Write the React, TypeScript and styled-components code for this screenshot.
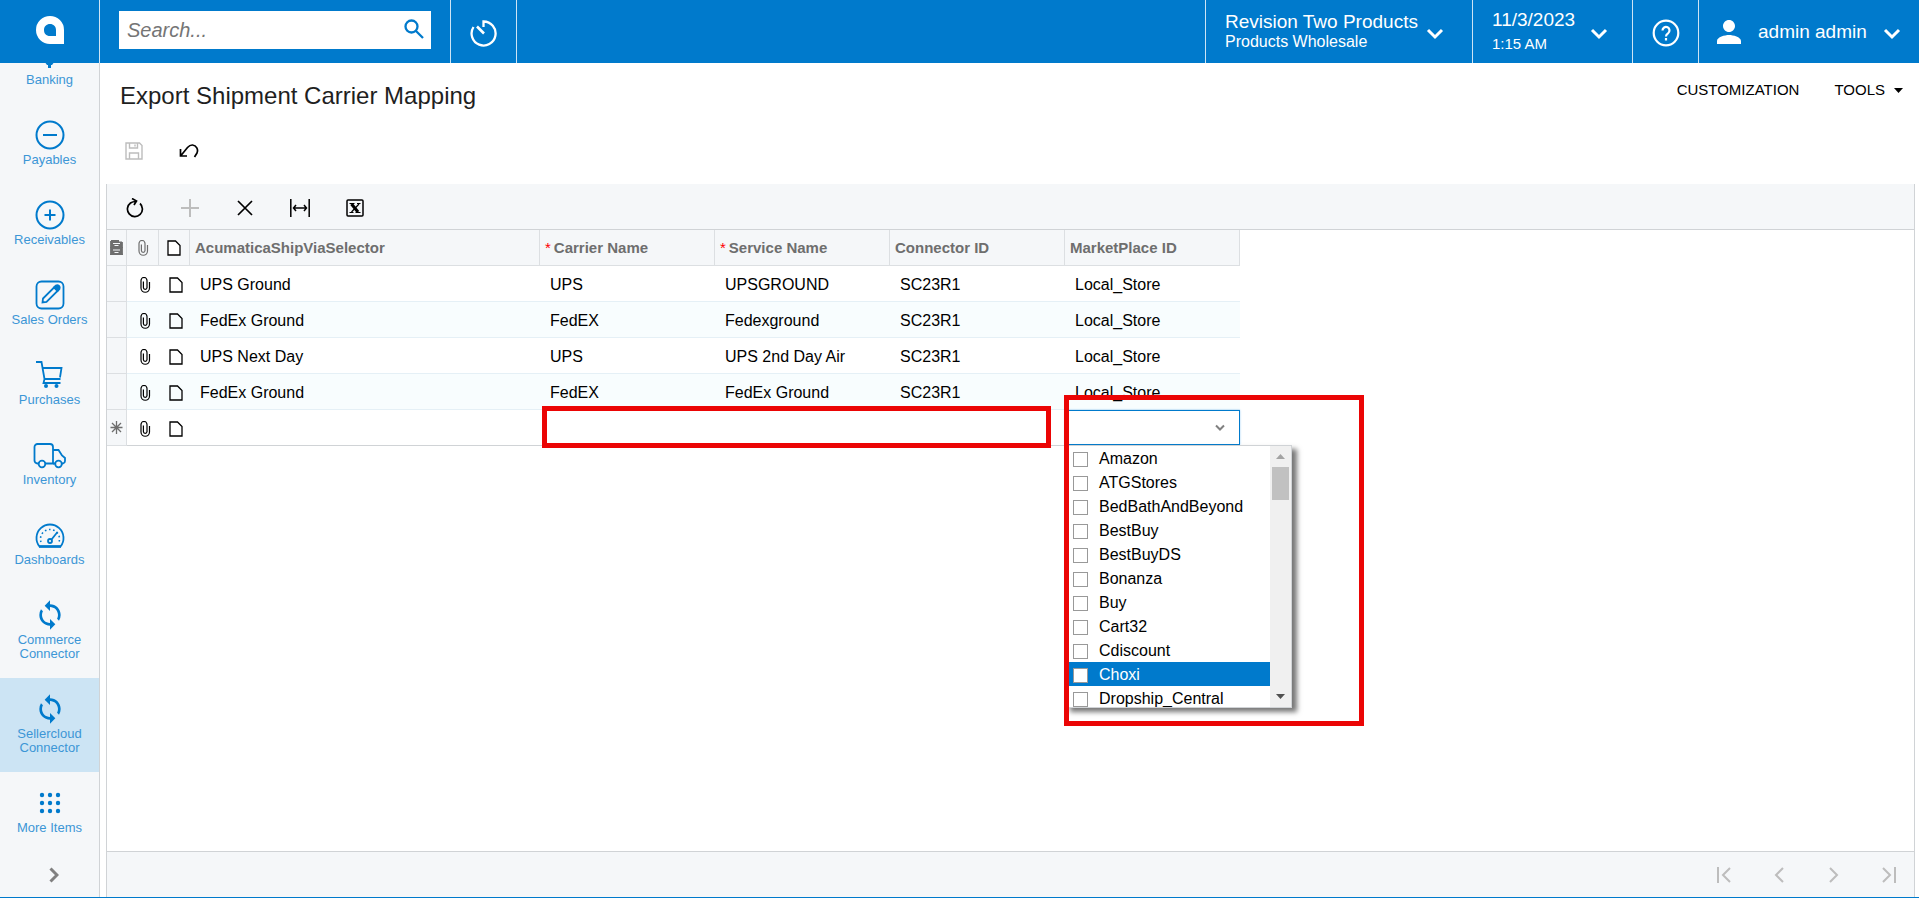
import React, { useState } from "react";
import styled, { createGlobalStyle, css } from "styled-components";
import { MdPerson, MdSync } from "react-icons/md";

const color = {
  brand: "#007acc",
  label: "#3c96d6",
  chrome: "#f5f7f9",
  line: "#d0d3d6",
  rowLine: "#e5f0f6",
  muted: "#6e6e6e",
  disabled: "#bdbdbd",
  mark: "#eb0505",
};

const GlobalStyle = createGlobalStyle`
  * { box-sizing: border-box; }
  body {
    margin: 0;
    background: #fff;
    color: #000;
    font-family: "Liberation Sans", Arial, sans-serif;
    font-size: 16px;
  }
  button, input { font: inherit; color: inherit; }
  button { margin: 0; padding: 0; border: 0; background: none; cursor: pointer; }
  svg { display: block; flex: none; }
`;

const Page = styled.div`
  display: flex;
  flex-direction: column;
  height: 100vh;
  border-bottom: 1px solid ${color.brand};
`;

const TopBar = styled.header`
  display: flex;
  flex: none;
  height: 63px;
  background: ${color.brand};
  color: #fff;
`;

const HomeLink = styled.a`
  display: flex;
  align-items: center;
  justify-content: center;
  width: 100px;
  padding-bottom: 3px;
  border-right: 1px solid #cce4f5;
  color: #fff;
`;

const SearchForm = styled.form`
  display: flex;
  align-items: center;
  width: 312px;
  height: 38px;
  margin: 11px 19px;
  padding: 0 7px 2px 8px;
  background: #fff;
  color: ${color.brand};
`;

const SearchInput = styled.input`
  flex: 1;
  min-width: 0;
  padding: 2px 0 0;
  border: 0;
  outline: 0;
  background: none;
  font-size: 20px;
  font-style: italic;
  color: #333;
  &::placeholder { color: #757575; opacity: 1; }
`;

const BarButton = styled.button<{ $width: number; $divider?: boolean }>`
  display: flex;
  align-items: center;
  justify-content: center;
  width: ${(p) => p.$width}px;
  padding-top: 2px;
  ${(p) => p.$divider && css`border-left: 1px solid #cce4f5;`}
`;

const BarSpacer = styled.div`
  flex: 1;
  border-left: 1px solid #cce4f5;
`;

const BarMenu = styled.button<{ $width: number; $right: number; $tall?: boolean }>`
  display: flex;
  align-items: center;
  justify-content: space-between;
  width: ${(p) => p.$width}px;
  padding: 0 ${(p) => p.$right}px 0 19px;
  border-left: 1px solid #cce4f5;
  text-align: left;
  white-space: nowrap;
  font-size: 16px;
  line-height: ${(p) => (p.$tall ? 24 : 20)}px;
  > svg { margin-top: 5px; }
`;

const BarLines = styled.span<{ $small?: boolean }>`
  display: flex;
  flex-direction: column;
  font-size: ${(p) => (p.$small ? 15 : 16)}px;
`;

const BarTitle = styled.strong`
  font-size: 19px;
  font-weight: 400;
`;

const UserMenu = styled(BarMenu)`
  justify-content: flex-start;
  gap: 11px;
  padding: 0 18px 0 12px;
  > svg:first-child { margin-top: 0; }
  > svg:last-child { margin-left: auto; }
`;

const Body = styled.div`
  display: flex;
  flex: 1;
  min-height: 0;
`;

const Sidebar = styled.nav`
  display: flex;
  flex-direction: column;
  flex: none;
  width: 100px;
  background: ${color.chrome};
  border-right: 1px solid ${color.line};
`;

const NavList = styled.ul`
  display: flex;
  flex-direction: column;
  justify-content: flex-end;
  flex: 1;
  min-height: 0;
  margin: 0;
  padding: 0;
  overflow: hidden;
  list-style: none;
`;

const NavItem = styled.li`
  flex: none;
`;

const NavLink = styled.a<{ $active?: boolean }>`
  display: flex;
  flex-direction: column;
  align-items: center;
  padding: 15px 8px 17px;
  background: ${(p) => (p.$active ? "#cce4f4" : "transparent")};
  color: ${color.label};
  font-size: 13px;
  line-height: 14px;
  text-align: center;
  text-decoration: none;
  svg { color: ${color.brand}; margin-bottom: 2px; }
`;

const NavToggle = styled.button`
  display: flex;
  align-items: center;
  justify-content: center;
  height: 45px;
  padding-left: 9px;
  color: #808080;
`;

const Main = styled.main`
  display: flex;
  flex-direction: column;
  flex: 1;
  min-width: 0;
  padding: 0 4px 0 6px;
`;

const TitleRow = styled.div`
  display: flex;
  justify-content: space-between;
  align-items: flex-start;
  height: 66px;
  padding: 18px 12px 0 14px;
`;

const Title = styled.h1`
  margin: 0;
  font-size: 24px;
  font-weight: 400;
  line-height: 30px;
  color: #1f1f1f;
`;

const TitleMenu = styled.div`
  display: flex;
  gap: 35px;
`;

const TitleMenuButton = styled.button`
  display: flex;
  align-items: center;
  gap: 9px;
  font-size: 15px;
  line-height: 18px;
`;

const ActionBar = styled.div`
  display: flex;
  align-items: flex-start;
  height: 55px;
`;

const IconButton = styled.button<{ $width?: number }>`
  display: flex;
  align-items: center;
  justify-content: center;
  width: ${(p) => p.$width ?? 55}px;
  height: 43px;
  &:disabled { color: ${color.disabled}; cursor: default; }
`;

const GridPanel = styled.section`
  display: flex;
  flex-direction: column;
  flex: 1;
  min-height: 0;
  border: solid ${color.line};
  border-width: 0 1px;
`;

const GridToolbar = styled.div`
  display: flex;
  height: 46px;
  padding-top: 2px;
  background: ${color.chrome};
  border-bottom: 1px solid ${color.line};
`;

const GridArea = styled.div`
  flex: 1;
  min-height: 0;
`;

const GridFooter = styled.footer`
  display: flex;
  align-items: center;
  justify-content: flex-end;
  gap: 5px;
  height: 46px;
  background: ${color.chrome};
  border-top: 1px solid ${color.line};
`;

const Table = styled.table`
  width: 1133px;
  table-layout: fixed;
  border-spacing: 0;
`;

const HeadCell = styled.th<{ $icon?: boolean }>`
  height: 36px;
  padding: 0 ${(p) => (p.$icon ? 0 : 5)}px;
  background: ${color.chrome};
  border-right: 1px solid #dcdfe2;
  border-bottom: 1px solid #dcdfe2;
  color: ${color.muted};
  font-size: 15px;
  text-align: left;
  white-space: nowrap;
  > svg { margin: 0 auto; }
`;

const Required = styled.span`
  margin-right: 3px;
  color: #f00;
  font-size: 15px;
  font-weight: 400;
`;

const Row = styled.tr<{ $alt?: boolean; $last?: boolean }>`
  background: ${(p) => (p.$alt ? "#f8fdfe" : "#fff")};
  td { border-bottom: 1px solid ${(p) => (p.$last ? color.line : color.rowLine)}; }
`;

const Cell = styled.td`
  position: relative;
  height: 36px;
  padding: 3px 10px 0;
  white-space: nowrap;
`;

const MarkerCell = styled.td`
  padding: 0;
  background: ${color.chrome};
  border-right: 1px solid #dcdfe2;
  border-bottom-color: #dcdfe2 !important;
  color: ${color.muted};
  svg { margin: 0 auto; }
`;

const IconCell = styled.td`
  padding: 2px 0 0 3px;
`;

const CellButton = styled.button`
  display: block;
  margin: 0 auto;
`;

const EditorCell = styled.td`
  position: relative;
  padding: 0;
`;

const Combo = styled.div`
  display: flex;
  align-items: center;
  height: 35px;
  padding-right: 13px;
  background: #fff;
  border: 1px solid ${color.brand};
  box-shadow: 0 0 2px #9fd0f5;
  color: #808080;
`;

const ComboInput = styled.input`
  flex: 1;
  min-width: 0;
  padding: 0 9px;
  border: 0;
  outline: 0;
  background: none;
`;

const Popup = styled.div`
  position: absolute;
  top: 35px;
  left: 0;
  z-index: 1;
  display: flex;
  width: 227px;
  height: 263px;
  background: #fff;
  border: 1px solid ${color.line};
  box-shadow: 5px 4px 5px #777;
`;

const OptionList = styled.div`
  flex: 1;
  overflow: hidden;
`;

const Option = styled.label<{ $active?: boolean }>`
  display: flex;
  align-items: center;
  gap: 11px;
  height: 24px;
  padding: 2px 0 0 7px;
  background: ${(p) => (p.$active ? color.brand : "transparent")};
  color: ${(p) => (p.$active ? "#fff" : "#000")};
`;

const Tick = styled.input`
  appearance: none;
  width: 15px;
  height: 15px;
  margin: 0;
  background: #fff;
  border: 1px solid #999;
  &:checked { background: ${color.brand}; }
`;

const ScrollTrack = styled.div`
  display: flex;
  flex-direction: column;
  align-items: center;
  width: 21px;
  background: #f0f0f0;
`;

const ScrollThumb = styled.div`
  width: 17px;
  height: 33px;
  margin-bottom: auto;
  background: #c1c1c1;
`;

const ScrollButton = styled.button<{ $dim?: boolean }>`
  display: flex;
  align-items: center;
  justify-content: center;
  width: 21px;
  height: 21px;
  color: ${(p) => (p.$dim ? "#a3a3a3" : "#505050")};
`;

const Highlight = styled.div<{ $area: "fields" | "list" }>`
  position: absolute;
  z-index: 2;
  border: 5px solid ${color.mark};
  pointer-events: none;
  ${(p) =>
    p.$area === "fields"
      ? css`top: -4px; left: 2px; width: 509px; height: 42px;`
      : css`top: -15px; left: -1px; width: 300px; height: 331px;`}
`;

type IconProps = { w: number; h?: number; sw?: number; children: React.ReactNode };

const Icon = ({ w, h = w, sw = 2, children }: IconProps) => (
  <svg width={w} height={h} viewBox={`0 0 ${w} ${h}`} fill="none" stroke="currentColor" strokeWidth={sw} aria-hidden="true">
    {children}
  </svg>
);

const Chevron = () => (
  <Icon w={18} h={12} sw={3}><path d="M2 2l7 7 7-7" /></Icon>
);

const Clip = () => (
  <Icon w={12} h={16} sw={1.2}>
    <path d="M8 4.500v6a1.800 1.800 0 0 1-3.600 0V4.500M8 11V3.500a3 3 0 0 0-6 0V11a4.200 4.200 0 0 0 8.500 0V5" />
  </Icon>
);

const Doc = () => (
  <Icon w={14} h={16} sw={1.3}><path d="M1 1h7.500l4.500 4.500V15H1z" /></Icon>
);

const navIcons: Record<string, React.ReactNode> = {
  Banking: <Icon w={32}><path d="M15 3L3 9h24zM7 12v8M15 12v8M23 12v8" /><path d="M10 22h11l-3 4h-1v3h-3v-3h-1z" fill="currentColor" stroke="none" /></Icon>,
  Payables: <Icon w={32}><circle cx="16" cy="16" r="13.500" /><path d="M9 16h14" /></Icon>,
  Receivables: <Icon w={32}><circle cx="16" cy="16" r="13.500" /><path d="M10.500 16h11M16 10.500v11" /></Icon>,
  "Sales Orders": (
    <Icon w={32} sw={1.8}>
      <rect x="2.500" y="2.500" width="27" height="27" rx="5" />
      <path d="M8.500 23.500l.5-4L20.500 8l3.500 3.500L12.500 23z" />
      <path d="M20 8.500l2-2q1.500-1 3 .5t.5 3l-2 2z" fill="currentColor" />
    </Icon>
  ),
  Purchases: (
    <Icon w={32} sw={1.8}>
      <path d="M2 3h5.500l3 17h16M8.500 9h19l-1.500 9.500M10.500 20l-1 4h17" />
      <circle cx="12" cy="27" r="2" fill="currentColor" stroke="none" />
      <circle cx="22.500" cy="27" r="2" fill="currentColor" stroke="none" />
    </Icon>
  ),
  Inventory: (
    <Icon w={34} h={32} sw={1.8}>
      <path d="M6 24.500H4.500a3 3 0 0 1-3-3V8a3 3 0 0 1 3-3H17a3 3 0 0 1 3 3v16.500h-7.500M20 11h5.500l3.500 5.500 3 2.500v3q0 2-2 2.500h-1" />
      <path d="M20 24.500h2" /><circle cx="9" cy="25" r="3.300" /><circle cx="25.500" cy="25" r="3.300" />
    </Icon>
  ),
  Dashboards: (
    <Icon w={32} sw={1.8}>
      <path d="M5.500 27.500A13.500 13.500 0 1 1 26.500 27.500z" />
      <path d="M5 27.500h22" strokeWidth="2.500" />
      <path d="M7 23a9.500 9.500 0 1 1 18 0" strokeDasharray="1.600 2.600" strokeWidth="1.600" />
      <circle cx="16" cy="22" r="2" /><path d="M17.500 20.500L23.500 13" />
    </Icon>
  ),
  "Commerce Connector": <MdSync size={32} />,
  "Sellercloud Connector": <MdSync size={32} />,
  "More Items": (
    <Icon w={32}>
      <g fill="currentColor" stroke="none">
        {[8, 16, 24].map((y) => [8, 16, 24].map((x) => <circle key={`${x}-${y}`} cx={x} cy={y} r="2.200" />))}
      </g>
    </Icon>
  ),
};

const rows = [
  ["UPS Ground", "UPS", "UPSGROUND", "SC23R1", "Local_Store"],
  ["FedEx Ground", "FedEX", "Fedexground", "SC23R1", "Local_Store"],
  ["UPS Next Day", "UPS", "UPS 2nd Day Air", "SC23R1", "Local_Store"],
  ["FedEx Ground", "FedEX", "FedEx Ground", "SC23R1", "Local_Store"],
];

const columns = [
  { name: "AcumaticaShipViaSelector" },
  { name: "Carrier Name", required: true },
  { name: "Service Name", required: true },
  { name: "Connector ID" },
  { name: "MarketPlace ID" },
];

const columnWidths = [20, 32, 31, 350, 175, 175, 175, 175];

const marketplaces = [
  "Amazon", "ATGStores", "BedBathAndBeyond", "BestBuy", "BestBuyDS", "Bonanza",
  "Buy", "Cart32", "Cdiscount", "Choxi", "Dropship_Central",
];

const RowIcons = () => (
  <>
    <IconCell><CellButton aria-label="Files"><Clip /></CellButton></IconCell>
    <IconCell><CellButton aria-label="Notes"><Doc /></CellButton></IconCell>
  </>
);

function MarketplacePicker() {
  const [picked, setPicked] = useState<string[]>([]);
  const toggle = (name: string) =>
    setPicked((list) => (list.includes(name) ? list.filter((n) => n !== name) : [...list, name]));
  return (
    <>
      <Combo>
        <ComboInput role="combobox" aria-label="MarketPlace ID" aria-expanded="true" aria-controls="marketplaces" readOnly value={picked.join(", ")} />
        <button aria-label="Toggle list"><Icon w={12} h={8} sw={2}><path d="M2 1.500l4 4 4-4" /></Icon></button>
      </Combo>
      <Popup id="marketplaces">
        <OptionList>
          {marketplaces.map((name) => (
            <Option key={name} $active={name === "Choxi"}>
              <Tick type="checkbox" checked={picked.includes(name)} onChange={() => toggle(name)} />
              {name}
            </Option>
          ))}
        </OptionList>
        <ScrollTrack>
          <ScrollButton $dim aria-label="Scroll up"><Icon w={9} h={5}><path d="M0 5l4.500-5L9 5z" fill="currentColor" stroke="none" /></Icon></ScrollButton>
          <ScrollThumb />
          <ScrollButton aria-label="Scroll down"><Icon w={9} h={5}><path d="M0 0l4.500 5L9 0z" fill="currentColor" stroke="none" /></Icon></ScrollButton>
        </ScrollTrack>
      </Popup>
    </>
  );
}

function Grid() {
  return (
    <Table>
      <colgroup>{columnWidths.map((w, i) => <col key={i} width={w} />)}</colgroup>
      <thead>
        <tr>
          <HeadCell $icon aria-label="Row settings">
            <Icon w={13} h={15} sw={1.5}>
              <path d="M2 0h7v1.500h3V7H1V0zM1 8h11v6.500H1z" fill="currentColor" stroke="none" />
              <path d="M0 7.500h13M0 14.300h13M.7 1v13M12.300 2v12" strokeWidth="1.200" />
              <path d="M3 3.500h7M3 10h7" stroke="#f5f7f9" strokeWidth="1" />
              <path d="M4.500 5.500h4M4.500 12.500h4" stroke="#f5f7f9" strokeWidth="1.200" />
            </Icon>
          </HeadCell>
          <HeadCell $icon aria-label="Files"><Clip /></HeadCell>
          <HeadCell $icon aria-label="Notes">
            <Icon w={14} h={16} sw={1.3}><path d="M1 1h7.500l4.500 4.500V15H1z" stroke="#000" fill="#fff" /></Icon>
          </HeadCell>
          {columns.map((c) => (
            <HeadCell key={c.name}>{c.required && <Required>*</Required>}{c.name}</HeadCell>
          ))}
        </tr>
      </thead>
      <tbody>
        {rows.map((cells, i) => (
          <Row key={i} $alt={i % 2 === 1}>
            <MarkerCell />
            <RowIcons />
            {cells.map((text, j) => <Cell key={j}>{text}</Cell>)}
          </Row>
        ))}
        <Row $last>
          <MarkerCell>
            <Icon w={13} sw={1.3}><path d="M6.500 0v13M.5 6.500h12M2 2l9 9M11 2l-9 9" /></Icon>
          </MarkerCell>
          <RowIcons />
          <Cell />
          <Cell><Highlight $area="fields" /></Cell>
          <Cell />
          <Cell />
          <EditorCell><MarketplacePicker /><Highlight $area="list" /></EditorCell>
        </Row>
      </tbody>
    </Table>
  );
}

export default function App() {
  return (
    <Page>
      <GlobalStyle />
      <TopBar>
        <HomeLink href="#home" aria-label="Home">
          <svg width="28" height="28" viewBox="0 0 28 28" aria-hidden="true">
            <path fill="currentColor" fillRule="evenodd" d="M14 0a14 14 0 0 1 14 14v14H14A14 14 0 0 1 14 0zM14 8c-3.500 0-6 2.500-6 6s2 6 6 6h6v-6c0-3.500-2.500-6-6-6z" />
          </svg>
        </HomeLink>
        <SearchForm role="search">
          <SearchInput aria-label="Search" placeholder="Search..." />
          <button type="button" aria-label="Run search">
            <Icon w={20} sw={2.3}><circle cx="7.500" cy="7.500" r="6" /><path d="M12 12l7 7" /></Icon>
          </button>
        </SearchForm>
        <BarButton $width={66} $divider aria-label="Recent">
          <Icon w={28} sw={2.3}>
            <path d="M13.500 8V2.500A12 12 0 1 1 3.500 8" />
            <path d="M7 7.500l7 7" strokeWidth="2.600" />
          </Icon>
        </BarButton>
        <BarSpacer />
        <BarMenu $width={267} $right={28}>
          <BarLines><BarTitle>Revision Two Products</BarTitle>Products Wholesale</BarLines>
          <Chevron />
        </BarMenu>
        <BarMenu $width={160} $right={24} $tall>
          <BarLines $small><BarTitle>11/3/2023</BarTitle>1:15 AM</BarLines>
          <Chevron />
        </BarMenu>
        <BarButton $width={66} $divider aria-label="Help">
          <Icon w={28} sw={2.2}>
            <circle cx="14" cy="14" r="12.300" />
            <path d="M10.500 11.500a3.500 3.500 0 1 1 5.500 2.800q-2 1.300-2 3.200M14 19v2.500" />
          </Icon>
        </BarButton>
        <UserMenu $width={221} $right={18}>
          <MdPerson size={36} />
          <BarTitle>admin admin</BarTitle>
          <Chevron />
        </UserMenu>
      </TopBar>
      <Body>
        <Sidebar>
          <NavList>
            {Object.entries(navIcons).map(([name, icon]) => (
              <NavItem key={name}>
                <NavLink href="#" $active={name === "Sellercloud Connector"}>{icon}{name}</NavLink>
              </NavItem>
            ))}
          </NavList>
          <NavToggle aria-label="Expand menu">
            <Icon w={10} h={16} sw={3}><path d="M1.500 1.500L8 8l-6.500 6.500" /></Icon>
          </NavToggle>
        </Sidebar>
        <Main>
          <TitleRow>
            <Title>Export Shipment Carrier Mapping</Title>
            <TitleMenu>
              <TitleMenuButton>CUSTOMIZATION</TitleMenuButton>
              <TitleMenuButton>TOOLS <Icon w={9} h={5}><path d="M0 0h9L4.500 5z" fill="currentColor" stroke="none" /></Icon></TitleMenuButton>
            </TitleMenu>
          </TitleRow>
          <ActionBar>
            <IconButton disabled aria-label="Save">
              <Icon w={18} sw={1.4}><path d="M1 1h13.500L17 3.500V17H1zM4.500 1v5h8V1M10 2.500v2M4.500 17v-6h9v6" /></Icon>
            </IconButton>
            <IconButton aria-label="Undo">
              <Icon w={20} h={16} sw={1.7}><path d="M1.500 6v7h6.500M2 12.500L8.500 4.500Q11 1.800 13.500 2c4 .5 6 4.500 4.500 8l-2.500 4" /></Icon>
            </IconButton>
          </ActionBar>
          <GridPanel>
            <GridToolbar>
              <IconButton aria-label="Refresh">
                <Icon w={18} h={20} sw={1.7}><path d="M14 5.500A7.500 7.500 0 1 1 4.500 5Q6.500 3.500 10 3.500M6 .5l4.500 2.500-2.500 4" /></Icon>
              </IconButton>
              <IconButton disabled aria-label="Add row"><Icon w={18}><path d="M0 9h18M9 0v18" /></Icon></IconButton>
              <IconButton aria-label="Delete row"><Icon w={16} sw={1.7}><path d="M1 1l14 14M15 1L1 15" /></Icon></IconButton>
              <IconButton aria-label="Fit columns">
                <Icon w={20} h={18} sw={1.5}><path d="M.8 0v18M19.200 0v18M3.500 9h13M6 6L3.500 9 6 12M14 6l2.500 3L14 12" /></Icon>
              </IconButton>
              <IconButton aria-label="Export to Excel">
                <Icon w={18} sw={1.5}>
                  <rect x="1" y="1" width="16" height="16" rx="1" />
                  <path d="M5.500 5l6.500 8" strokeWidth="3" /><path d="M13 5l-7.500 8M3.500 4.500h5M11 4.500h3.500M3.500 13.500h4M9.500 13.500h5" strokeWidth="1.200" />
                </Icon>
              </IconButton>
            </GridToolbar>
            <GridArea><Grid /></GridArea>
            <GridFooter>
              <IconButton $width={50} disabled aria-label="First page"><Icon w={14} h={16}><path d="M1 0v16M13 1L6 8l7 7" /></Icon></IconButton>
              <IconButton $width={50} disabled aria-label="Previous page"><Icon w={10} h={16}><path d="M9 1L2 8l7 7" /></Icon></IconButton>
              <IconButton $width={50} disabled aria-label="Next page"><Icon w={10} h={16}><path d="M1 1l7 7-7 7" /></Icon></IconButton>
              <IconButton $width={50} disabled aria-label="Last page"><Icon w={14} h={16}><path d="M13 0v16M1 1l7 7-7 7" /></Icon></IconButton>
            </GridFooter>
          </GridPanel>
        </Main>
      </Body>
    </Page>
  );
}
